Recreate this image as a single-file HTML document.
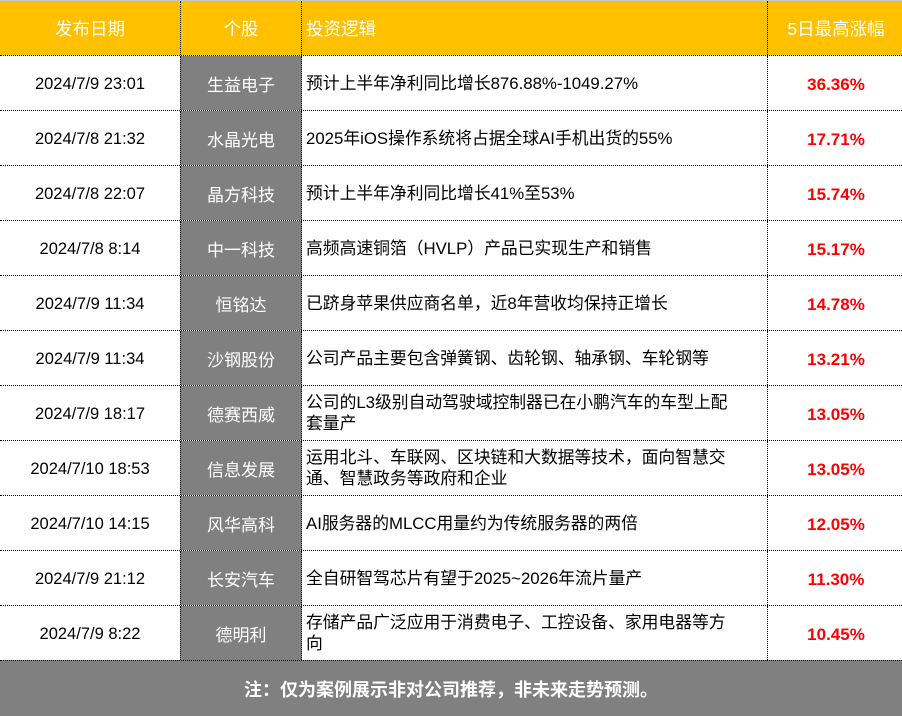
<!DOCTYPE html>
<html><head><meta charset="utf-8"><style>
*{margin:0;padding:0;box-sizing:border-box}
body{width:902px;height:716px;overflow:hidden;background:#fff;font-family:"Liberation Sans","Noto Sans CJK SC",sans-serif;position:relative}
.top{position:absolute;left:0;top:0;width:902px;height:1px;background:#c8c8c8}
.hdr{position:absolute;top:1px;height:54px;background:#FFC000;color:#fff;font-size:17.5px;display:flex;align-items:center}
.row{position:absolute;left:0;width:902px;height:55px;border-top:1px dotted #000}
.c{position:absolute;top:0;height:54px;display:flex;align-items:center}
.d{left:0;width:180px;justify-content:center;font-size:16.5px;color:#000;padding-top:3px}
.n{left:180px;width:122px;background:#808080;color:#fff;justify-content:center;font-size:17px;border-left:1px dotted #000;border-right:1px dotted #000}
.l{left:302px;width:465px;padding-left:4px;font-size:16.8px;line-height:21px;color:#000}
.p{left:767px;width:135px;justify-content:center;color:#f00;font-weight:bold;font-size:17px;border-left:1px dotted #000;padding-left:2px;padding-top:3px}
.ft{position:absolute;left:0;top:660px;width:902px;height:56px;background:#808080;color:#fff;font-weight:bold;font-size:18px;display:flex;align-items:center;justify-content:center;border-top:1px dotted #000}
</style></head><body>
<div class="top"></div>
<div class="hdr" style="left:0;width:180px;justify-content:center">发布日期</div>
<div class="hdr" style="left:180px;width:122px;justify-content:center;border-left:1px dotted #000;border-right:1px dotted #000">个股</div>
<div class="hdr" style="left:302px;width:465px;padding-left:4px">投资逻辑</div>
<div class="hdr" style="left:767px;width:135px;justify-content:center;border-left:1px dotted #000;padding-left:2px">5日最高涨幅</div>

<div class="row" style="top:55px"><div class="c d">2024/7/9 23:01</div><div class="c n">生益电子</div><div class="c l">预计上半年净利同比增长876.88%-1049.27%</div><div class="c p">36.36%</div></div>
<div class="row" style="top:110px"><div class="c d">2024/7/8 21:32</div><div class="c n">水晶光电</div><div class="c l">2025年iOS操作系统将占据全球AI手机出货的55%</div><div class="c p">17.71%</div></div>
<div class="row" style="top:165px"><div class="c d">2024/7/8 22:07</div><div class="c n">晶方科技</div><div class="c l">预计上半年净利同比增长41%至53%</div><div class="c p">15.74%</div></div>
<div class="row" style="top:220px"><div class="c d">2024/7/8 8:14</div><div class="c n">中一科技</div><div class="c l">高频高速铜箔（HVLP）产品已实现生产和销售</div><div class="c p">15.17%</div></div>
<div class="row" style="top:275px"><div class="c d">2024/7/9 11:34</div><div class="c n">恒铭达</div><div class="c l">已跻身苹果供应商名单，近8年营收均保持正增长</div><div class="c p">14.78%</div></div>
<div class="row" style="top:330px"><div class="c d">2024/7/9 11:34</div><div class="c n">沙钢股份</div><div class="c l">公司产品主要包含弹簧钢、齿轮钢、轴承钢、车轮钢等</div><div class="c p">13.21%</div></div>
<div class="row" style="top:385px"><div class="c d">2024/7/9 18:17</div><div class="c n">德赛西威</div><div class="c l">公司的L3级别自动驾驶域控制器已在小鹏汽车的车型上配<br>套量产</div><div class="c p">13.05%</div></div>
<div class="row" style="top:440px"><div class="c d">2024/7/10 18:53</div><div class="c n">信息发展</div><div class="c l">运用北斗、车联网、区块链和大数据等技术，面向智慧交<br>通、智慧政务等政府和企业</div><div class="c p">13.05%</div></div>
<div class="row" style="top:495px"><div class="c d">2024/7/10 14:15</div><div class="c n">风华高科</div><div class="c l">AI服务器的MLCC用量约为传统服务器的两倍</div><div class="c p">12.05%</div></div>
<div class="row" style="top:550px"><div class="c d">2024/7/9 21:12</div><div class="c n">长安汽车</div><div class="c l">全自研智驾芯片有望于2025~2026年流片量产</div><div class="c p">11.30%</div></div>
<div class="row" style="top:605px"><div class="c d">2024/7/9 8:22</div><div class="c n">德明利</div><div class="c l">存储产品广泛应用于消费电子、工控设备、家用电器等方<br>向</div><div class="c p">10.45%</div></div>
<div class="ft">注：仅为案例展示非对公司推荐，非未来走势预测。</div>
</body></html>
